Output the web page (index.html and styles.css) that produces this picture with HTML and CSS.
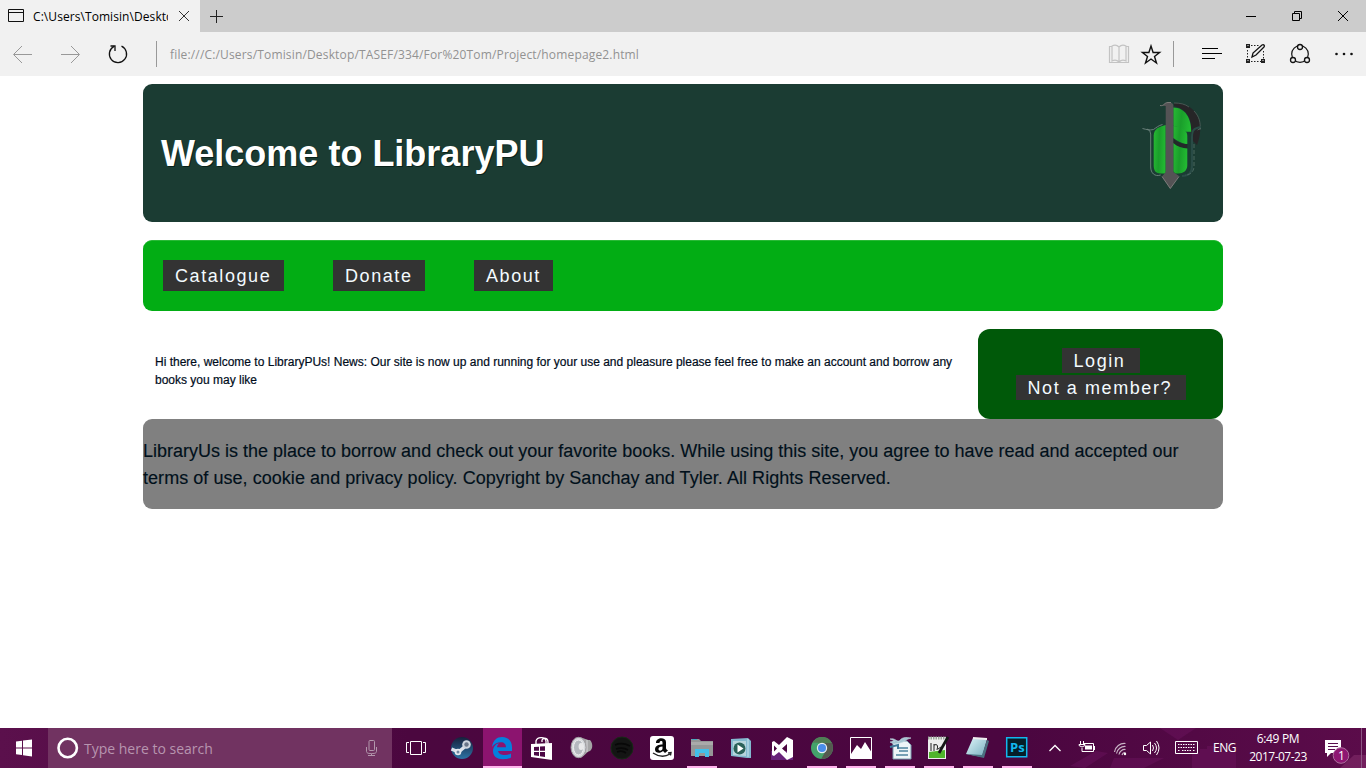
FILE: index.html
```html
<!DOCTYPE html>
<html lang="en">
<head>
<meta charset="utf-8">
<title>LibraryPU</title>
<link rel="stylesheet" href="styles.css">
</head>
<body>
<div class="screen">
  <header class="tabs">
    <div class="tab">
      <svg width="24" height="32" viewBox="0 0 24 32"><path d="M8.500 9.500h15v12h-15zM8.500 12.500h15" fill="none" stroke="#111"/></svg>
      <span class="tab-title"><span class="tab-text">C:\Users\Tomisin\Desktop</span></span>
      <svg width="32" height="32" viewBox="168 0 32 32"><path d="M179 11l10 10M189 11l-10 10" stroke="#333"/></svg>
    </div>
    <svg width="32" height="32" viewBox="200 0 32 32"><path d="M210 16.500h13M216.500 10v13" stroke="#222"/></svg>
    <svg class="window-controls" width="140" height="32" viewBox="1226 0 140 32" fill="none" stroke="#000"><path d="M1246 16.500h10M1292.500 13.500h7v7h-7zM1294.500 13v-1.500h7v7h-2M1338 11l10 10M1348 11l-10 10"/></svg>
  </header>
  <nav class="toolbar">
    <svg width="170" height="44" viewBox="0 32 170 44" fill="none">
      <path d="M32 54.500H14M22 46l-8.500 8.500 8.500 8.500M61 54.500h18M71 46l8.500 8.500-8.500 8.500" stroke="#999"/>
      <path d="M121.500 46.200a8.600 8.600 0 1 1-7.500.2" stroke="#111" stroke-width="1.300"/><path d="M110.500 46h4.500v5" stroke="#111" stroke-width="1.300"/>
      <path d="M156.500 41v26" stroke="#999"/>
    </svg>
    <span class="url">file:///C:/Users/Tomisin/Desktop/TASEF/334/For%20Tom/Project/homepage2.html</span>
    <svg class="tools" width="266" height="44" viewBox="1100 32 266 44" fill="none">
      <path d="M1112 46.500h-2.500v16h19v-16H1126M1119 62c-2-2-5-2-7-1V46c2-1 5-1 7 1 2-2 5-2 7-1v15c-2-1-5-1-7 1zV47" stroke="#c3c3c3" stroke-width="1.200"/>
      <path d="M1151 46l2.100 6.500h6.500l-5.100 4 2 6.500-5.500-4-5.500 4 2-6.500-5.100-4h6.500z" stroke="#111" stroke-width="1.400"/>
      <path d="M1173.500 41v26" stroke="#999"/>
      <path d="M1202 48.500h16M1202 53.500h20M1202 58.500h13" stroke="#000"/>
      <path d="M1247.500 50v9M1251 45.500h9M1251 61.500h10M1263.500 51v8" stroke="#222" stroke-dasharray="1.500 1.500"/>
      <path d="M1246 44h4v4h-4zM1246 59h4v4h-4zM1261 59h4v4h-4z" fill="#222"/><path d="M1252 57l1-4 9-8c2-1 3 1 2 2l-8 8z" stroke="#111" stroke-width="1.300"/>
      <path d="M1247.500 45.500h1M1247.500 60.500h1M1262.500 60.500h1" stroke="#eee"/>
      <circle cx="1300" cy="54" r="8.300" stroke="#111" stroke-width="1.200"/>
      <g fill="#f1f1f1" stroke="#111" stroke-width="1.300"><circle cx="1300" cy="47" r="2.500"/><circle cx="1293" cy="60" r="2.500"/><circle cx="1307" cy="60" r="2.500"/></g>
      <g fill="#111"><circle cx="1336.500" cy="54" r="1.300"/><circle cx="1344" cy="54" r="1.300"/><circle cx="1351.500" cy="54" r="1.300"/></g>
    </svg>
  </nav>
  <main class="page">
    <div class="banner">
      <h1>Welcome to LibraryPU</h1>
      <svg class="crest" width="64" height="92" viewBox="1140 100 64 92">
        <defs><linearGradient id="leaf" x2="1" y2=".15"><stop stop-color="#27b934"/><stop offset=".5" stop-color="#1a9e2b"/><stop offset="1" stop-color="#22b932"/></linearGradient></defs>
        <path d="M1174 103c15 0 24 8 26 21 1 8-1 16-3 21l-6-6v-8c1-12-4-22-17-25z" fill="#262527"/>
        <path d="M1174 103c6 0 11 1 15 4M1194 111c5 5 7 12 6 19" fill="none" stroke="#596562" stroke-width=".7"/>
        <path d="M1142.500 128.500c4 1 7 2 11 1 3-2 5-4 9-5M1147 129q3.700 1 3.700 5v33c0 6 4 10 10 8" fill="none" stroke="#718680" stroke-width=".9"/>
        <path d="M1201 127c-7 1-9 3-9 10v29c0 7-4 10-10 10" fill="none" stroke="#294b46" stroke-width="2"/>
        <path d="M1201 128l-5 3M1194 144v22c0 6-4 9-9 9" fill="none" stroke="#56716a" stroke-width=".8" stroke-dasharray="4 2"/>
        <path d="M1165.700 125v48.500h-5c-5 0-7-3-7-8v-30c0-6 5-9 12-10.500z" fill="url(#leaf)"/>
        <path d="M1173.300 107.500c12 0 18 11 18 24.200h-5c-3-3-8-5-13-6z" fill="url(#leaf)"/>
        <path d="M1173.300 126c8 0 14 4 14 10v8c-4 0-8-2-14-6z" fill="url(#leaf)"/>
        <path d="M1173.300 139c5 4 9 5 14 5v4.500c-6-1-10-2-14-5.500z" fill="#242829"/>
        <path d="M1173.300 143c4 4 9 5 14 5.500v17c0 5-4 8-9 8h-3l-2-2z" fill="url(#leaf)"/>
        <path d="M1160 105.500c4 1 4-3 8-3 4-.5 5.300 1 5.300 3V172l5.700 4-8.700 12.700-8.300-12.200 3.700-4.500v-66z" fill="#545355"/>
        <path d="M1160 105.500c4 1 4-3 8-3h3M1162 176.500l8.300 12 8.700-12" fill="none" stroke="#8b8987" stroke-width=".8"/>
      </svg>
    </div>
    <div class="menu"><a class="button catalogue">Catalogue</a><a class="button donate">Donate</a><a class="button about">About</a></div>
    <div class="content">
      <p class="news">Hi there, welcome to LibraryPUs! News: Our site is now up and running for your use and pleasure please feel free to make an account and borrow any<br>books you may like</p>
      <aside class="account"><a class="login">Login</a><a class="member">Not a member?</a></aside>
    </div>
    <footer class="footer"><p>LibraryUs is the place to borrow and check out your favorite books. While using this site, you agree to have read and accepted our<br><span class="terms">terms of use, cookie and privacy policy. Copyright by Sanchay and Tyler. All Rights Reserved.</span></p></footer>
  </main>
  <div class="taskbar">
    <svg width="48" height="40" viewBox="0 728 48 40"><path d="M16 741.500l6-.8v6.800h-6zM23 740.600l9-1.100v8h-9zM16 748.500h6v6.500l-6-.8zM23 748.500h9v8l-9-1.200z" fill="#fff"/></svg>
    <div class="search">
      <svg width="36" height="40" viewBox="48 728 36 40"><circle cx="67.700" cy="748" r="9.200" fill="none" stroke="#fff" stroke-width="2.600"/></svg>
      <span class="search-text">Type here to search</span>
      <svg class="mic" width="40" height="40" viewBox="352 728 40 40" fill="none" stroke="#b397ac"><rect x="369" y="740.500" width="5.500" height="10" rx="1"/><path d="M366.500 747v4c0 2 1 2.500 5 2.500s5-.5 5-2.500v-4M371.500 754v2M368 755.500h7"/></svg>
    </div>
    <svg width="48" height="40" viewBox="392 728 48 40" fill="none" stroke="#fff"><path d="M410.500 741.500h11v13h-11zM409 742.500h-2.500v10h2.500M423 742.500h2.500v10H423"/></svg>
    <svg width="43" height="40" viewBox="440 728 43 40"><defs><linearGradient id="steam" x2="0" y2="1"><stop stop-color="#17203b"/><stop offset="1" stop-color="#2d73a5"/></linearGradient></defs><circle cx="462" cy="748" r="11" fill="url(#steam)"/><path d="M451.500 749l7 3 6-5" fill="none" stroke="#dce1eb" stroke-width="3.500"/><circle cx="466.500" cy="744.500" r="4.300" fill="#cdd4df"/><circle cx="466.500" cy="744.500" r="2.200" fill="#687488"/><circle cx="458" cy="752" r="3.300" fill="#e6e9ef"/><circle cx="458" cy="752" r="1.500" fill="#6f88a3"/></svg>
    <div class="app open active"><svg width="39" height="40" viewBox="483 728 39 40"><path d="M492 747c1-7 5-10 10-10 6 0 10 4 10 10v4h-14c1 3 3 4 7 4 2 0 4-.5 6-1.500v4c-2 1.200-5 1.700-8 1.700-6 0-10-3-10-8 0-4 2-7 6-8-1 1-2 3-2 4h9c0-3-2-5-5-5-4 0-7 2-9 4.800z" fill="#0580dc"/></svg></div>
    <div class="app"><svg width="40" height="40" viewBox="522 728 40 40"><path d="M531 744l21-1v17l-21-3z" fill="#fff"/><path d="M536 744v-3c1-4 9-5 10 0v3M542 742v-2c2-3 6-2 6 2v2" fill="none" stroke="#fff" stroke-width="1.300"/><path d="M534 747l5-.3v4h-5zM540 746.500l5-.3v4.500h-5zM534 752h5v4l-5-.7zM540 752h5v5l-5-.7z" fill="#4c0845"/></svg></div>
    <div class="app"><svg width="40" height="40" viewBox="562 728 40 40"><path d="M579 737c6 1 7 3 11 3 3 3 3 9 0 11-4 1-5 5-10 7z" fill="#a5a5a6"/><path d="M587 740v12" stroke="#c9c9ca" stroke-width="1.500"/><ellipse cx="578.500" cy="747.500" rx="7.500" ry="10.200" fill="#d7dadd" stroke="#9f9ca0"/><ellipse cx="578.500" cy="747.500" rx="5" ry="7.500" fill="#b5b9bf" stroke="#eee"/><ellipse cx="581" cy="746.500" rx="2.400" ry="3.500" fill="#e9e9ea"/></svg></div>
    <div class="app"><svg width="40" height="40" viewBox="602 728 40 40"><circle cx="622" cy="748" r="11" fill="#141514" stroke="#162b15"/><path d="M615 745q7-3 15 1M616 749q7-2 12 1M617 752q5-2 9 1" fill="none" stroke="#080808" stroke-width="1.700"/></svg></div>
    <div class="app"><svg width="40" height="40" viewBox="642 728 40 40"><rect x="650" y="736" width="24" height="24" rx="3" fill="#fff"/><path d="M656 743c0-6 10-6 10-1v6c0 1 1 2 2 2.500l-3 2.500-2-2c-3 3-8 2-8-1.500 0-4 4-5 7.500-5v-2c0-2-3-2-3 .5zM662.500 746.500c-3 0-4 1-4 2.500 0 2.500 4 2 4-.5z" fill="#080808" fill-rule="evenodd"/><path d="M653 753q9 6 17 1M668 753l3-.5-.5 3" fill="none" stroke="#222" stroke-width="1.400"/></svg></div>
    <div class="app open"><svg width="40" height="40" viewBox="682 728 40 40"><path d="M691 739h8l2 2h12v15h-22z" fill="#959797"/><path d="M691 742h22v3h-22" fill="#aaa"/><path d="M692 739h5v1h-5" fill="#45aac1"/><path d="M695 749h14v8h-4v-4h-6v4h-4z" fill="#42bfea"/></svg></div>
    <div class="app"><svg width="40" height="40" viewBox="722 728 40 40"><path d="M731 739l17-1 3 3v17h-4l-16-2z" fill="#83b9cf"/><path d="M733 741h13v15l-13-1z" fill="#b7d5dd"/><path d="M748 739v18" stroke="#c7e4ee"/><circle cx="739.500" cy="748.500" r="6" fill="#2a6159"/><path d="M737.500 744.500l6 4-6 4z" fill="#fff"/></svg></div>
    <div class="app"><svg width="40" height="40" viewBox="762 728 40 40"><path d="M771 751h22v9h-22z" fill="#68217a"/><path d="M787 737l6 3v17l-6 3-8-8-5 4-2-1v-13l2-1 5 4zM787 744l-5 4.500 5 4.500zM774 745.500v6l3-3z" fill="#fff" fill-rule="evenodd"/></svg></div>
    <div class="app open small"><svg width="39" height="40" viewBox="802 728 39 40"><circle cx="822" cy="748" r="11" fill="#44a36b"/><path d="M812.500 742.500C817 735 828 735 832 743h-10z" fill="#507d55"/><path d="M832.200 743c3 9-3 16-11 16l5-9-2-7z" fill="#555a50"/><circle cx="822" cy="748" r="5.200" fill="#e8eef2"/><circle cx="822" cy="748" r="4" fill="#4a8deb"/></svg></div>
    <div class="app open small"><svg width="39" height="40" viewBox="841 728 39 40"><path d="M850.500 737.500h21v21h-21z" fill="#4b073f" stroke="#fff"/><path d="M851 754l6-9 4 4 4-7 7 11v6h-21z" fill="#fff"/></svg></div>
    <div class="app open small"><svg width="39" height="40" viewBox="880 728 39 40"><path d="M893 741h14l4 4v14h-18z" fill="#edf4f7" stroke="#7b9caf"/><path d="M899 748h9M899 751h9M896 755h12" stroke="#4e829e" stroke-width="1.500"/><path d="M890 739c5-1 6 2 9 3 2-5 7-5 12-4-5 1-6 4-11 5l-6 1-4-2 5-1z" fill="#a5c5d2" stroke="#c8dfe6" stroke-width=".6"/><path d="M890 747l8-2v4" fill="none" stroke="#417a9a" stroke-width="2"/></svg></div>
    <div class="app open small"><svg width="39" height="40" viewBox="919 728 39 40"><path d="M928 737h18v22h-18z" fill="#eee"/><path d="M928 738h18" stroke="#9aa69a" stroke-width="3" stroke-dasharray="1.500 1"/><path d="M929 752l16-2v8h-16z" fill="#4fb52b"/><path d="M931 743v8M934 744v7M934 745q5-2 3 5M938 749l3-2" stroke="#222" fill="none"/><path d="M948 737l-9 16" stroke="#171717" stroke-width="2.700"/></svg></div>
    <div class="app open small"><svg width="39" height="40" viewBox="958 728 39 40"><defs><linearGradient id="notes" x2="1" y2="1"><stop stop-color="#dff5fa"/><stop offset="1" stop-color="#75adbd"/></linearGradient></defs><path d="M973 738l14 1-5 18-16-3z" fill="url(#notes)"/><path d="M987 740l2 1-5 17-18-4 16 1z" fill="#4a7080"/><path d="M973 738l14 1" stroke="#eee" stroke-width="2"/></svg></div>
    <div class="app open small"><svg width="39" height="40" viewBox="997 728 39 40"><path d="M1006.700 737.700h20v19h-20z" fill="#061e29" stroke="#12b8ee" stroke-width="1.500"/><text x="1010" y="751.500" class="ps">Ps</text></svg></div>
    <div class="tray">
      <svg class="skyline" width="166" height="40" viewBox="1070 728 166 40"><path d="M1070 766l26-15 12 2-23 15zM1114 758h50l-20 10h-34zM1192 768v-15h8v-4h7v-3h9v6h20v16zM1160 728l18 12 18-12z" fill="#7c1b6c" opacity=".3"/></svg>
      <svg width="174" height="40" viewBox="1036 728 174 40" fill="none" stroke="#fff">
        <path d="M1049.500 751l5.500-5.500 5.500 5.500" stroke-width="1.300"/>
        <path d="M1083.500 743.500h10v8h-10M1094.500 746v4"/><path d="M1085 745.500h7v4h-7z" fill="#fff" stroke="none"/><path d="M1080.500 741v3M1083.500 741v3M1079 744.500h6v1q-3 3-6 0zM1082 748v3.500h2"/>
        <g stroke="#c9b4c6" stroke-width="1.200"><path d="M1114.500 752a10 10 0 0 1 11-8.500M1116.500 753.500a8.500 8.500 0 0 1 9-7M1119 754.500a6 6 0 0 1 6.500-5M1122 755a3.500 3.500 0 0 1 3.500-2.500"/></g><circle cx="1125" cy="754" r="1.200" fill="#fff" stroke="none"/>
        <path d="M1143.500 745.500h3l4-3.500v12l-4-3.500h-3zM1152.500 745q2 3 0 6M1154.500 743q4 5 0 10M1156.500 741q5 7 0 14"/>
        <path d="M1175.500 741.500h22v12h-22z"/><path d="M1178 744.500h17M1178 747.500h17M1178 750.500h2M1182 750.500h10M1193 750.500h2" stroke-dasharray="1.500 1"/>
      </svg>
      <span class="lang">ENG</span>
      <div class="clock"><span class="time">6:49 PM</span><span class="date">2017-07-23</span></div>
      <svg width="49" height="40" viewBox="1317 728 49 40"><path d="M1340 768l14-13h12v13z" fill="#8a316f" opacity=".5"/><path d="M1325 740h16v13h-10l-4 4v-4h-2z" fill="#fff"/><path d="M1328 743.500h10M1328 746.500h10M1328 749.500h7" stroke="#59104f"/><circle cx="1341" cy="755.500" r="7.800" fill="#8e1672" stroke="#ad709e"/><text x="1338" y="760" class="badge">1</text><path d="M1361.500 728v40" stroke="#8b5582"/></svg>
    </div>
  </div>
</div>
</body>
</html>
```
FILE: styles.css
```css
* { box-sizing: border-box; }
body { margin: 0; background: #fff; font-family: "Liberation Sans", Arial, sans-serif; overflow: hidden; }
svg { display: block; flex: none; }
.screen { width: 1366px; height: 768px; display: flex; flex-direction: column; }
.tabs { height: 32px; background: #ccc; display: flex; }
.tab { width: 200px; height: 32px; display: flex; background: #f1f1f1; }
.tab-title { width: 144px; padding-left: 9px; overflow: hidden; white-space: nowrap; font: 12px/33px "Open Sans", sans-serif; }
.tab-text { letter-spacing: .07px; }
.window-controls, .tools { margin-left: auto; }
.toolbar { height: 44px; background: #f1f1f1; display: flex; }
.url { font: 12px/45px "Open Sans", sans-serif; letter-spacing: .16px; color: #929292; white-space: nowrap; }
.page { width: 1080px; height: 652px; margin: 0 auto; padding-top: 8px; }
.banner { height: 138px; background: #1b3c33; border-radius: 9px; display: flex; justify-content: space-between; padding: 16px 19px 0 18px; }
h1 { margin: 28px 0 0; font-size: 36px; line-height: 52px; letter-spacing: 0; color: #fff; text-shadow: 1px 1px #092119; }
.menu { height: 71px; margin-top: 18px; background: #02ad14; border-radius: 9px; border-top: 1px solid #29b936; display: flex; gap: 49px; padding: 19px 20px; }
.button { height: 31px; background: #333; color: #f3fbff; font-size: 18px; line-height: 33px; letter-spacing: 1.58px; padding-left: 12px; }
.catalogue { width: 121px; } .donate { width: 92px; } .about { width: 79px; }
.content { height: 90px; margin-top: 18px; display: flex; justify-content: space-between; }
.news { margin: 24px 0 0 12px; font-size: 12px; line-height: 18px; color: #000c1b; white-space: nowrap; -webkit-text-stroke: .2px #000c1b; }
.account { width: 245px; height: 90px; background: #005909; border-radius: 12px; display: flex; flex-direction: column; align-items: center; padding-top: 19px; gap: 2px; }
.account a { background: #333; color: #f3fbff; height: 25px; font-size: 18px; line-height: 26px; letter-spacing: 1.58px; padding-left: 12px; }
.login { width: 78px; } .member { width: 170px; }
.footer { height: 90px; background: #808080; border-radius: 9px; padding-top: 19px; }
.footer p { margin: 0; font-size: 18px; line-height: 27px; color: #00101b; white-space: nowrap; -webkit-text-stroke: .15px #00101b; }
.terms { letter-spacing: .045px; }
.taskbar { height: 40px; background: linear-gradient(90deg, #5b104c, #4b073f 30%, #4b0640 75%, #5b0c4a); display: flex; color: #fff; font-family: "Open Sans", sans-serif; }
.search { width: 344px; height: 40px; background: #713361; display: flex; }
.search-text { color: #b795af; font-size: 14px; line-height: 41px; letter-spacing: 0; white-space: nowrap; }
.mic { margin-left: auto; }
.app { width: 40px; height: 40px; flex: none; position: relative; }
.active, .small { width: 39px; }
.active { background: #8c146f; }
.open::after { content: ""; position: absolute; left: 5px; bottom: 0; width: 30px; height: 2px; background: #ffb3ec; }
.active::after { left: 0; width: 39px; }
.ps { font: bold 13px "Open Sans", sans-serif; fill: #12b8ee; }
.tray { width: 330px; display: flex; position: relative; font-size: 12px; }
.skyline { position: absolute; left: 34px; top: 0; }
.tray > :not(.skyline) { position: relative; }
.lang { width: 29px; line-height: 40px; padding-left: 3px; letter-spacing: -.5px; }
.clock { width: 78px; display: flex; flex-direction: column; align-items: center; padding-top: 2px; line-height: 18px; }
.time { letter-spacing: -.35px; } .date { letter-spacing: -.5px; }
.badge { font: 12px "Open Sans", sans-serif; fill: #fff; }
```
